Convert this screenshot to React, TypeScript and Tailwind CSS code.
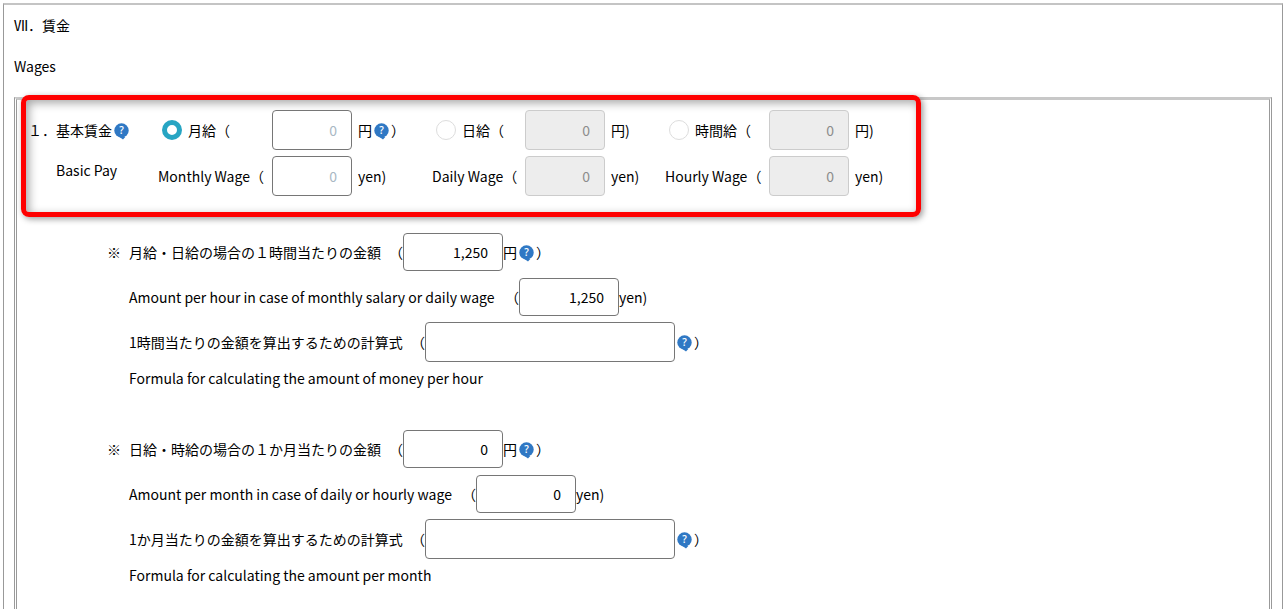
import { useState } from "react"

type WageType = "monthly" | "daily" | "hourly"

const wageGroups: {
  id: WageType
  ja: string
  en: string
  columns: string
  help: boolean
}[] = [
  { id: "monthly", ja: "月給", en: "Monthly Wage", columns: "grid-cols-[108px_80px_74px]", help: true },
  { id: "daily", ja: "日給", en: "Daily Wage", columns: "grid-cols-[87px_80px_54px]", help: false },
  { id: "hourly", ja: "時間給", en: "Hourly Wage", columns: "grid-cols-[98px_80px_40px]", help: false },
]

function HelpIcon() {
  return (
    <button type="button" aria-label="ヘルプ" className="mx-[2px] shrink-0 pt-[2px]">
      <svg width="15" height="17" viewBox="0 0 15 17" className="block">
        <circle cx="7.5" cy="7.5" r="7.2" fill="#2f78c4" />
        <path d="M5.5 14h5.8L9 16.6z" fill="#2f78c4" />
        <text x="7.5" y="11.2" textAnchor="middle" fill="#fff" fontSize="10" fontWeight="600" fontFamily="Open Sans">
          ?
        </text>
      </svg>
    </button>
  )
}

function BasicPay() {
  const [selected, setSelected] = useState<WageType>("monthly")
  const inputStyle =
    "h-10 w-20 rounded border border-[#767676] bg-white px-[14px] text-right placeholder:text-[#a9b8c4] disabled:border-[#cccccc] disabled:bg-[#ededed] disabled:placeholder:text-[#8c8c8c]"

  return (
    <div className="relative -mt-[5px] ml-1 flex h-[122px] w-[900px] rounded-lg border-[5px] border-[#fe0000] pt-[10px] pl-[2px] shadow-[2px_2px_6px_rgba(0,0,0,0.4),inset_3px_3px_10px_rgba(0,0,0,0.35)]">
      <div className="flex w-[130px] shrink-0 flex-col">
        <div className="flex h-10 items-center">
          <span>１．基本賃金</span>
          <HelpIcon />
        </div>
        <div className="flex h-10 items-center pl-7">Basic Pay</div>
      </div>

      {wageGroups.map((group) => {
        const disabled = group.id !== selected
        return (
          <div key={group.id} className={`grid ${group.columns} h-[86px] shrink-0 grid-rows-2 gap-x-[6px] gap-y-[6px]`}>
            <label className="flex items-center gap-[6px] pl-1">
              <input
                type="radio"
                name="wage"
                checked={group.id === selected}
                onChange={() => setSelected(group.id)}
                className="size-5 shrink-0 appearance-none rounded-full border border-[#dddddd] bg-white checked:border-[5px] checked:border-[#27a5c3]"
              />
              <span>{group.ja}（</span>
            </label>
            <input aria-label={group.ja} placeholder="0" disabled={disabled} className={inputStyle} />
            <div className="flex items-center">
              <span>{group.help ? "円" : "円)"}</span>
              {group.help && (
                <>
                  <HelpIcon />
                  <span>）</span>
                </>
              )}
            </div>

            <label htmlFor={`${group.id}-en`} className="flex items-center whitespace-nowrap">
              {group.en}（
            </label>
            <input id={`${group.id}-en`} placeholder="0" disabled={disabled} className={inputStyle} />
            <div className="flex items-center">yen)</div>
          </div>
        )
      })}
    </div>
  )
}

function AmountBlock(props: {
  id: string
  ja: string
  en: string
  enWidth: string
  formulaJa: string
  formulaEn: string
  amount: string
}) {
  const inputStyle = "h-[38px] w-[100px] rounded border border-[#767676] bg-white px-[14px] text-right"

  return (
    <div className="pl-[90px]">
      <div className="flex items-center">
        <span className="w-[22px]">※</span>
        <label htmlFor={`${props.id}-ja`} className="flex w-[274px] justify-between">
          <span>{props.ja}</span>
          <span>（</span>
        </label>
        <input id={`${props.id}-ja`} defaultValue={props.amount} className={inputStyle} />
        <span>円</span>
        <HelpIcon />
        <span>）</span>
      </div>

      <div className="mt-[7px] flex items-center pl-[22px]">
        <label htmlFor={`${props.id}-en`} className={`flex justify-between ${props.enWidth}`}>
          <span>{props.en}</span>
          <span>（</span>
        </label>
        <input id={`${props.id}-en`} defaultValue={props.amount} className={inputStyle} />
        <span>yen)</span>
      </div>

      <div className="mt-[6px] flex items-center pl-[22px]">
        <label htmlFor={`${props.id}-formula`} className="flex w-[296px] justify-between">
          <span>{props.formulaJa}</span>
          <span>（</span>
        </label>
        <input
          id={`${props.id}-formula`}
          className="h-10 w-[250px] rounded border border-[#767676] bg-white px-[14px]"
        />
        <HelpIcon />
        <span>）</span>
      </div>
      <p className="mt-[6px] pl-[22px]">{props.formulaEn}</p>
    </div>
  )
}

export default function App() {
  return (
    <div className="flex min-h-screen flex-col bg-white px-[3px] pt-[3px] font-['Noto_Sans_CJK_JP',sans-serif] text-[14px] leading-5 text-black">
      <section className="flex flex-1 flex-col border-x border-t-2 border-x-[#999999] border-t-[#c4c4c4] px-[10px] pt-[10px]">
        <h2>Ⅶ．賃金</h2>
        <p className="mt-[21px]">Wages</p>

        <form className="mt-[21px] flex-1 border-x-[3px] border-t-[3px] border-x-[#999999] border-t-[#c8c8c8] pb-6 [border-style:solid_double_none]">
          <BasicPay />

          <div className="mt-4 flex flex-col gap-[42px]">
            <AmountBlock
              id="hour"
              ja="月給・日給の場合の１時間当たりの金額"
              en="Amount per hour in case of monthly salary or daily wage"
              enWidth="w-[390px]"
              formulaJa="1時間当たりの金額を算出するための計算式"
              formulaEn="Formula for calculating the amount of money per hour"
              amount="1,250"
            />
            <AmountBlock
              id="month"
              ja="日給・時給の場合の１か月当たりの金額"
              en="Amount per month in case of daily or hourly wage"
              enWidth="w-[347px]"
              formulaJa="1か月当たりの金額を算出するための計算式"
              formulaEn="Formula for calculating the amount per month"
              amount="0"
            />
          </div>
        </form>
      </section>
    </div>
  )
}
